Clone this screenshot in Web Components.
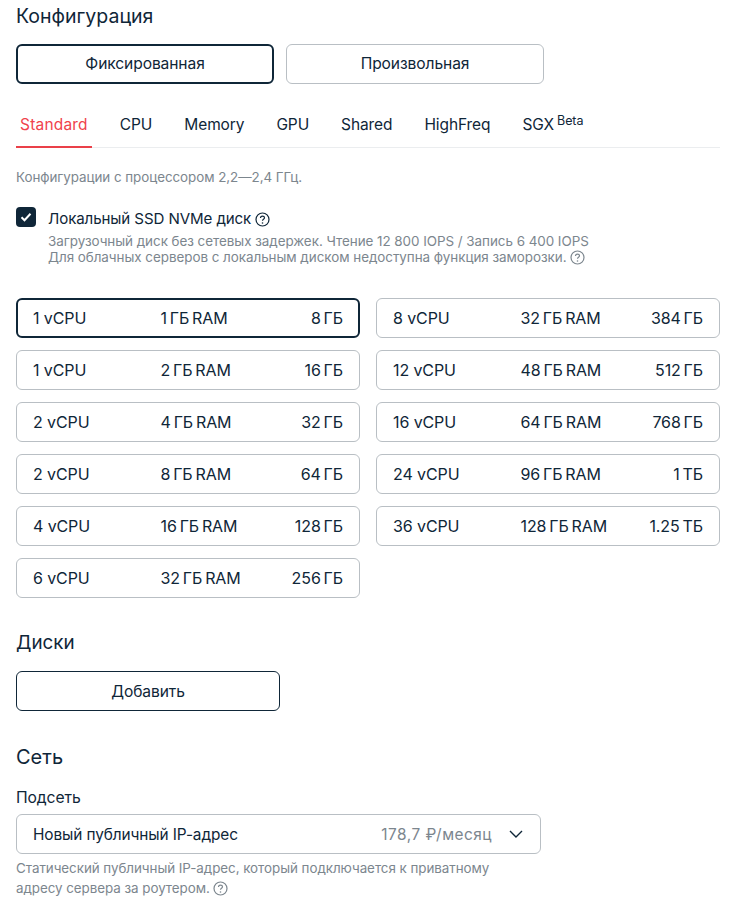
<!DOCTYPE html>
<html lang="ru"><head><meta charset="utf-8"><title>Конфигурация</title>
<style>
html,body{margin:0;background:#fff}
body{font-family:Inter,"Noto Sans",sans-serif;color:#0f2638;font-size:15px}
</style></head><body>
<x-page>
  <x-heading style="--h:32px;--mt:0px;--fs:19.5px">Конфигурация</x-heading>
  <x-btnrow style="--mt:12px;--w:258px">
    <x-btn selected>Фиксированная</x-btn>
    <x-btn>Произвольная</x-btn>
  </x-btnrow>
  <x-tabs style="--mt:20px">
    <x-tab active>Standard</x-tab><x-tab>CPU</x-tab><x-tab>Memory</x-tab><x-tab>GPU</x-tab><x-tab>Shared</x-tab><x-tab>HighFreq</x-tab><x-tab>SGX<sup slot="sup">Beta</sup></x-tab>
  </x-tabs>
  <x-hint style="--mt:20px;--lh:18px">Конфигурации с процессором 2,2—2,4 ГГц.</x-hint>
  <x-check style="--mt:21px">
    Локальный SSD NVMe диск <x-q></x-q>
    <span slot="desc">Загрузочный диск без сетевых задержек. Чтение 12 800 IOPS / Запись 6 400 IOPS<br>Для облачных серверов с локальным диском недоступна функция заморозки. <x-q></x-q></span>
  </x-check>
  <x-grid style="--mt:33px">
    <x-plan selected cpu="1 vCPU" ram="1 ГБ RAM" disk="8 ГБ"></x-plan>
    <x-plan cpu="8 vCPU" ram="32 ГБ RAM" disk="384 ГБ"></x-plan>
    <x-plan cpu="1 vCPU" ram="2 ГБ RAM" disk="16 ГБ"></x-plan>
    <x-plan cpu="12 vCPU" ram="48 ГБ RAM" disk="512 ГБ"></x-plan>
    <x-plan cpu="2 vCPU" ram="4 ГБ RAM" disk="32 ГБ"></x-plan>
    <x-plan cpu="16 vCPU" ram="64 ГБ RAM" disk="768 ГБ"></x-plan>
    <x-plan cpu="2 vCPU" ram="8 ГБ RAM" disk="64 ГБ"></x-plan>
    <x-plan cpu="24 vCPU" ram="96 ГБ RAM" disk="1 ТБ"></x-plan>
    <x-plan cpu="4 vCPU" ram="16 ГБ RAM" disk="128 ГБ"></x-plan>
    <x-plan cpu="36 vCPU" ram="128 ГБ RAM" disk="1.25 ТБ"></x-plan>
    <x-plan cpu="6 vCPU" ram="32 ГБ RAM" disk="256 ГБ"></x-plan>
  </x-grid>
  <x-heading style="--h:32px;--mt:29px;--fs:18.8px">Диски</x-heading>
  <x-btnrow style="--mt:12px;--w:264px"><x-btn>Добавить</x-btn></x-btnrow>
  <x-heading style="--h:32px;--mt:30px;--fs:20px">Сеть</x-heading>
  <x-label style="--mt:14px">Подсеть</x-label>
  <x-select price="178,7 ₽/месяц" style="--mt:5px">Новый публичный IP-адрес</x-select>
  <x-hint style="--mt:4px;--lh:20px;--w:500px">Статический публичный IP-адрес, который подключается к приватному адресу сервера за роутером. <x-q></x-q></x-hint>
</x-page>
<script>
function def(name,html,init){
  customElements.define(name,class extends HTMLElement{
    constructor(){super();this.attachShadow({mode:'open'}).innerHTML=html;}
    connectedCallback(){if(init)init(this,this.shadowRoot);}
  });
}
const DARK='#0f2638',BORDER='#b9bfc4',GREY='#7c868e';
const F='letter-spacing:-.1px;';
def('x-page',`<style>:host{display:block;padding:0 11px 0 16px;box-sizing:border-box;width:731px;height:904px;overflow:hidden}</style><slot></slot>`);
def('x-heading',`<style>:host{display:block;margin-top:var(--mt);height:var(--h);line-height:32px;font-size:var(--fs);font-weight:400;color:${DARK}}</style><slot></slot>`);
def('x-btnrow',`<style>:host{display:flex;gap:12px;margin-top:var(--mt)}::slotted(x-btn){width:var(--w)}</style><slot></slot>`);
def('x-btn',`<style>:host{display:block;box-sizing:border-box;height:40px;border:1px solid ${BORDER};border-radius:6px;text-align:center;line-height:38px;font-size:15.6px;color:${DARK};${F}}
:host([selected]){border:2px solid ${DARK};line-height:36px}</style><slot></slot>`,(h)=>{if(h.textContent==='Добавить'){h.style.borderColor=DARK;h.style.lineHeight='40px'}});
def('x-tabs',`<style>:host{display:flex;gap:24px;margin-top:var(--mt);border-bottom:1px solid #ebedef;height:43px}</style><slot></slot>`);
def('x-tab',`<style>:host{display:block;padding:0 4px;height:43px;box-sizing:border-box;line-height:41px;font-size:15.5px;color:${DARK};${F}}
:host([active]){color:#f0424c;border-bottom:2px solid #ea4049;height:44px;letter-spacing:.2px}
::slotted(sup){font-size:12.5px;line-height:0;vertical-align:5.5px;margin-left:3px}</style><slot></slot><slot name="sup"></slot>`);
def('x-hint',`<style>:host{display:block;margin-top:var(--mt);line-height:var(--lh);width:var(--w,auto);font-size:13.4px;color:${GREY};letter-spacing:-.05px}</style><slot></slot>`);
def('x-check',`<style>:host{display:flex;gap:12px;margin-top:var(--mt)}
.box{flex:none;width:20px;height:20px;border-radius:4px;background:${DARK};display:flex;align-items:center;justify-content:center}
.t{padding-top:1px;line-height:22px;font-size:15.1px;color:${DARK};${F}}
.d{font-size:13.45px;line-height:16px;color:${GREY};margin-top:3px;letter-spacing:-.05px}</style>
<div class="box"><svg width="12" height="10" viewBox="0 0 12 10" fill="none"><path d="M1.5 5.2 4.5 8.2 10.5 1.8" stroke="#fff" stroke-width="2"/></svg></div>
<div><div class="t"><slot></slot></div><div class="d"><slot name="desc"></slot></div></div>`);
def('x-q',`<style>:host{display:inline-block;width:15px;height:15px;vertical-align:-3px}svg{display:block}</style>
<svg width="15" height="15" viewBox="0 0 15 15" fill="none" stroke="currentColor"><circle cx="7.5" cy="7.5" r="6.5" stroke-width="1.2"/><path d="M5.5 6c0-1.2.9-1.9 2-1.9s2 .7 2 1.7c0 1.5-2 1.5-2 3" stroke-width="1.2"/><circle cx="7.5" cy="11" r=".8" fill="currentColor" stroke="none"/></svg>`);
def('x-grid',`<style>:host{display:grid;grid-template-columns:344px 344px;column-gap:16px;row-gap:12px;margin-top:var(--mt)}</style><slot></slot>`);
def('x-plan',`<style>:host{display:grid;grid-template-columns:127.5px 1fr auto;align-items:center;box-sizing:border-box;height:40px;padding:0 16px;border:1px solid ${BORDER};border-radius:6px;font-size:16px;color:${DARK};${F}}
:host([selected]){border:2px solid ${DARK};padding:0 15px}
#b{word-spacing:-1.5px}#c{word-spacing:-1.5px}
</style><span id="a"></span><span id="b"></span><span id="c"></span>`,(h,s)=>{
 s.getElementById('a').textContent=h.getAttribute('cpu');s.getElementById('b').textContent=h.getAttribute('ram');s.getElementById('c').textContent=h.getAttribute('disk');});
def('x-label',`<style>:host{display:block;margin-top:var(--mt);line-height:22px;font-size:15.7px;color:${DARK};${F}}</style><slot></slot>`);
def('x-select',`<style>:host{display:flex;align-items:center;box-sizing:border-box;width:525px;height:40px;margin-top:var(--mt);padding:0 16px;border:1px solid ${BORDER};border-radius:6px;font-size:15.4px;color:${DARK};${F}}
.s{flex:1}.p{color:${GREY};margin-right:16px;letter-spacing:.5px}svg{display:block}</style>
<span class="s"><slot></slot></span><span class="p" id="p"></span><svg width="16" height="16" viewBox="0 0 16 16" fill="none" stroke="${DARK}" stroke-width="1.4"><path d="M2 5l6 6 6-6"/></svg>`,(h,s)=>{s.getElementById('p').textContent=h.getAttribute('price')});
</script>
</body></html>
